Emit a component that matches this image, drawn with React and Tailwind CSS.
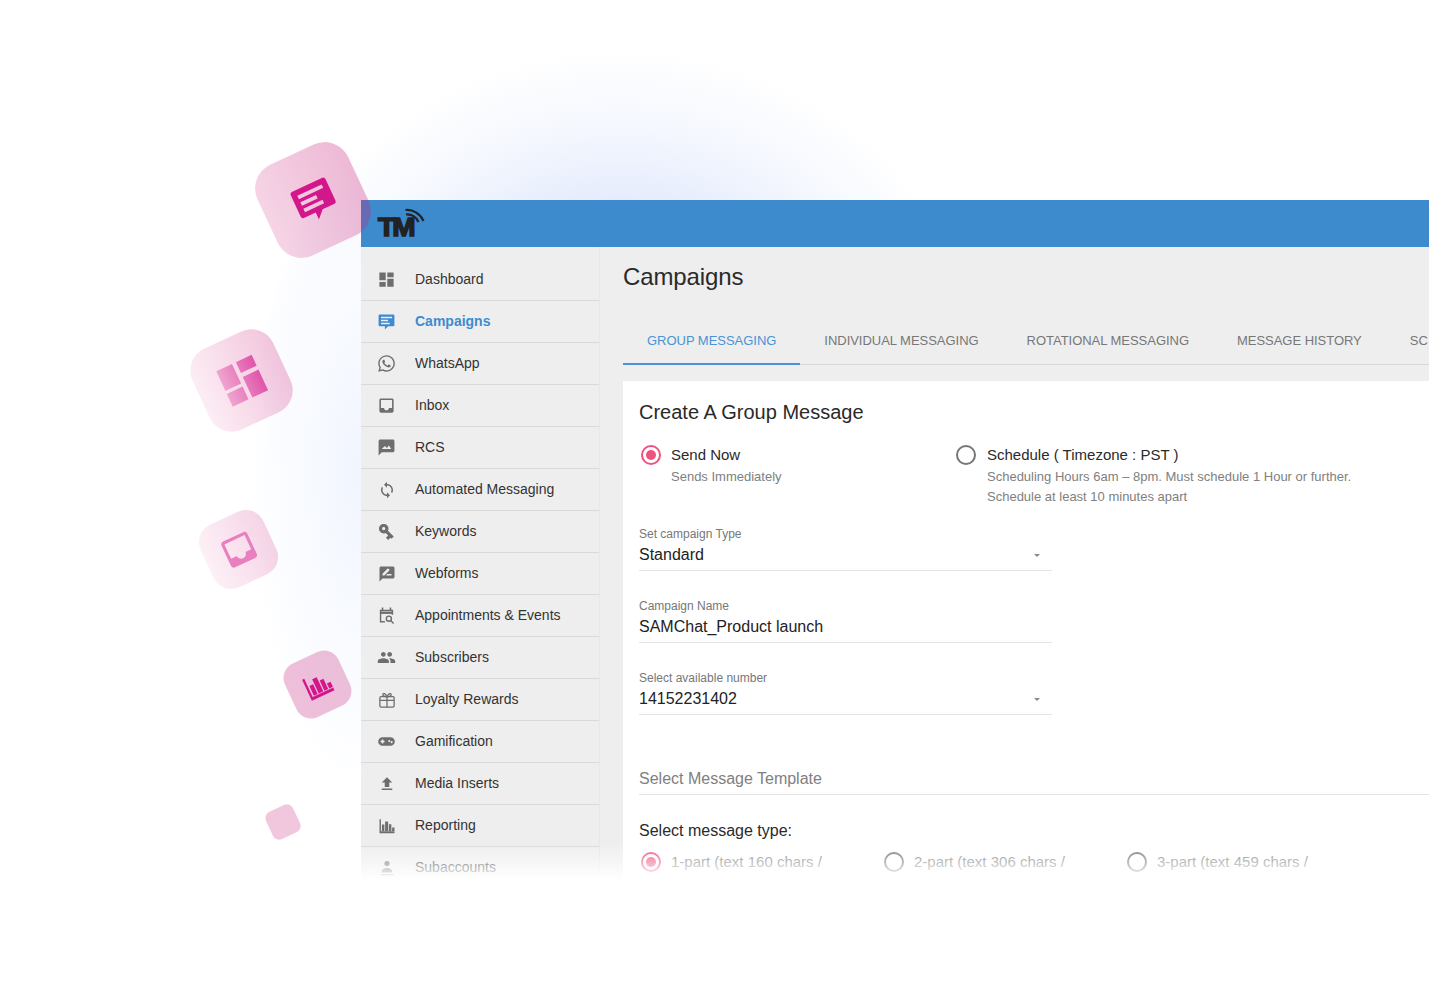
import React from "react";
import { FaWhatsapp } from "react-icons/fa";
import { MdDashboard, MdSync, MdVpnKey, MdRateReview, MdPeople, MdFileUpload } from "react-icons/md";

const INBOX = "M19 3H4.99c-1.11 0-1.98.89-1.98 2L3 19c0 1.1.88 2 1.99 2H19c1.1 0 2-.9 2-2V5c0-1.11-.9-2-2-2zm0 12h-4c0 1.66-1.35 3-3 3s-3-1.34-3-3H4.99V5H19v10z";
const BUBBLE = "M3.500 3h17A1.500 1.500 0 0 1 22 4.500v12a1.500 1.500 0 0 1-1.500 1.500H14l-4 4v-4H3.500A1.500 1.500 0 0 1 2 16.500v-12A1.500 1.500 0 0 1 3.500 3zM5 6v2h14V6zM5 9.800v2h9v-2zM5 13.500v2h11v-2z";
const BARS = "M2 3h1.900v16H22v2.500H2zM5.200 10h3.300v8.500H5.200zM9.500 6h4v12.500h-4zM14.500 9.500h3.300v9h-3.300zM18.800 14H22v4.500h-3.200z";

function I({ d, className = "" }) {
  return (
    <svg viewBox="0 0 24 24" className={className} fill="currentColor" fillRule="evenodd">
      <path d={d} />
    </svg>
  );
}

function Rcs({ className }) {
  return (
    <svg viewBox="0 0 24 24" className={className} fill="currentColor" fillRule="evenodd">
      <path d="M4 2h16c1.100 0 2 .9 2 2v12c0 1.100-.9 2-2 2H6l-4 4V4c0-1.100.9-2 2-2zM6 14h12l-3-4.500-2.500 3L10 10z" />
    </svg>
  );
}

function Calendar({ className }) {
  return (
    <svg viewBox="0 0 24 24" className={className} fill="none" stroke="currentColor" strokeWidth="1.800">
      <path d="M7 2v3M17 2v3" strokeWidth="2" />
      <path d="M10 20H4.500V5.500h15V11" />
      <path d="M4 8.500h16" strokeWidth="3" />
      <circle cx="15" cy="16" r="3.200" />
      <path d="M17.500 18.500L21 22" />
    </svg>
  );
}

function Person({ className }) {
  return (
    <svg viewBox="0 0 24 24" className={className} fill="currentColor">
      <circle cx="12" cy="6" r="3.500" />
      <path d="M5 17c0-3 4-5 7-5s7 2 7 5v1H5zM3 20h18v1.500H3z" />
    </svg>
  );
}

function Gift({ className }) {
  return (
    <svg viewBox="0 0 24 24" className={className} fill="none" stroke="currentColor" strokeWidth="1.700">
      <rect x="2.500" y="7.500" width="19" height="14" rx="1.500" />
      <path d="M2.500 12.500h19M12 7.500v14" />
      <path d="M12 7.500C10 3 7 2.500 6.500 4.500S9 7.500 12 7.500zM12 7.500C14 3 17 2.500 17.500 4.500S15 7.500 12 7.500z" />
    </svg>
  );
}

function Pad({ className }) {
  return (
    <svg viewBox="0 0 24 24" className={className} fill="currentColor" fillRule="evenodd">
      <path d="M7 6.500h10a5.500 5.500 0 0 1 0 11H7a5.500 5.500 0 0 1 0-11zM6 9.500v1.500H4.500v2H6v1.500h2V13h1.500v-2H8V9.500zM15.500 10a1.300 1.300 0 1 0 0 2.600 1.300 1.300 0 0 0 0-2.600zM18.500 11.500a1.300 1.300 0 1 0 0 2.600 1.300 1.300 0 0 0 0-2.600z" />
    </svg>
  );
}

const ico = "w-[18px] h-[18px]";
const big = "w-[19px] h-[19px]";
const rows = [
  ["Dashboard", <MdDashboard className={big} />],
  ["Campaigns", <I d={BUBBLE} className={big} />],
  ["WhatsApp", <FaWhatsapp className={big} />],
  ["Inbox", <I d={INBOX} className={big} />],
  ["RCS", <Rcs className={big} />],
  ["Automated Messaging", <MdSync className={ico} />],
  ["Keywords", <MdVpnKey className="w-[19px] h-[19px] rotate-45" />],
  ["Webforms", <MdRateReview className={ico} />],
  ["Appointments & Events", <Calendar className={big} />],
  ["Subscribers", <MdPeople className={big} />],
  ["Loyalty Rewards", <Gift className={ico} />],
  ["Gamification", <Pad className={big} />],
  ["Media Inserts", <MdFileUpload className={ico} />],
  ["Reporting", <I d={BARS} className={ico} />],
  ["Subaccounts", <Person className={ico} />],
];

function SideRow({ label, icon }) {
  const active = label === "Campaigns";
  return (
    <div className="h-[42px] shrink-0 flex items-center border-b border-[#d9d9d9]">
      <div className={`w-[54px] flex justify-center pr-[3px] ${active ? "text-[#3d8bd0]" : "text-[#6e6e6e]"}`}>{icon}</div>
      <span className={`text-[14px] ${active ? "font-bold text-[#3d8bd0]" : "text-[#333333]"}`}>{label}</span>
    </div>
  );
}

function Radio({ on }) {
  return (
    <span className={`w-5 h-5 shrink-0 rounded-full border-2 flex items-center justify-center ${on ? "border-[#f0527f]" : "border-[#767676]"}`}>
      {on && <span className="w-[10px] h-[10px] rounded-full bg-[#f0527f]" />}
    </span>
  );
}

function Field({ label, value, caret }) {
  return (
    <div className="w-[413px] border-b border-[#e4e4e4] pb-[3px]">
      <div className="text-[12px] leading-4 text-[#777777]">{label}</div>
      <div className="mt-[1px] flex items-center justify-between h-6">
        <span className="text-[16px] text-[#222222]">{value}</span>
        {caret && <span className="mr-3 w-0 h-0 border-x-[3px] border-x-transparent border-t-[3px] border-t-[#8a8a8a]" />}
      </div>
    </div>
  );
}

function Tile({ className, children }) {
  return (
    <div className={`absolute z-20 -rotate-[25deg] flex items-center justify-center ${className}`}>{children}</div>
  );
}

export default function App() {
  return (
    <div className="relative w-[1429px] h-[995px] overflow-hidden bg-white font-['Liberation_Sans',Arial,sans-serif]">
      <div className="absolute inset-0 bg-[radial-gradient(ellipse_360px_330px_at_620px_380px,#d6e2fb_0%,#e2eafc_50%,#f4f7fe_76%,#ffffff_100%)]" />
      <div className="absolute inset-0 bg-[radial-gradient(ellipse_110px_320px_at_361px_470px,#f1f5fe_0%,#f9fbff_60%,#ffffff00_100%)]" />

      <Tile className="left-[263px] top-[150px] w-[100px] h-[100px] rounded-[26px] bg-gradient-to-r from-[#d0288033] to-[#c8207850]">
        <I d={BUBBLE} className="ml-[2px] mt-[1px] w-[46px] h-[46px] text-[#d4168c]" />
      </Tile>
      <Tile className="left-[197px] top-[336px] w-[89px] h-[89px] rounded-[24px] bg-gradient-to-r from-[#e0409018] to-[#d0288044]">
        <svg viewBox="0 0 24 24" className="w-[52px] h-[52px]">
          <defs>
            <linearGradient id="dg" x1="0" x2="1" y1="0" y2="0">
              <stop offset="0" stopColor="#f0a5d0" />
              <stop offset="1" stopColor="#e055aa" />
            </linearGradient>
          </defs>
          <path fill="url(#dg)" d="M3 13h8V3H3zM3 21h8v-6.500H3zM13 21h8V10.500h-8zM13 3v5.500h8V3z" />
        </svg>
      </Tile>
      <Tile className="left-[204px] top-[515px] w-[69px] h-[69px] rounded-[19px] bg-gradient-to-r from-[#e0409014] to-[#d0288033]">
        <I d={INBOX} className="w-[38px] h-[38px] text-[#ea7fc0]" />
      </Tile>
      <Tile className="left-[288px] top-[655px] w-[59px] h-[59px] rounded-[16px] bg-[#c8207848]">
        <I d={BARS} className="w-[30px] h-[30px] text-[#d4168c]" />
      </Tile>
      <Tile className="left-[268px] top-[807px] w-[30px] h-[30px] rounded-[7px] bg-[#c8207840]" />

      <div className="relative pl-[361px] pt-[200px]">
        <div className="relative w-[1068px] h-[680px] overflow-hidden flex flex-col bg-[#eeeeee]">
          <div className="relative h-[47px] shrink-0 bg-[#3d8bcc]">
            <span className="absolute left-[17px] top-[12px] origin-left scale-x-[1.12] text-[25px] leading-[30px] font-bold text-[#222222] tracking-[-2.5px] [-webkit-text-stroke:1.4px_#222222]">TM</span>
            <svg viewBox="0 0 20 20" className="absolute left-[44px] top-[8px] w-[20px] h-[20px]" fill="none" stroke="#222222" strokeWidth="2.200">
              <path d="M0.500 2A18 18 0 0 1 18.500 13" />
              <path d="M1 6.500A12 12 0 0 1 13.500 14" />
            </svg>
          </div>
          <div className="flex flex-1 min-h-0">
            <div className="w-[239px] shrink-0 pt-[12px] border-r border-[#e6e6e6] flex flex-col">
              {rows.map(([l, i]) => (
                <SideRow key={l} label={l} icon={i} />
              ))}
            </div>
            <div className="flex-1 min-w-0 pl-[23px] pt-[14px]">
              <h1 className="text-[24px] leading-8 text-[#2a2a2a] tracking-[-0.1px]">Campaigns</h1>
              <div className="mt-6 h-12 flex border-b border-[#d8d8d8] whitespace-nowrap text-[13px] tracking-[-0.03px] text-[#777777]">
                <div className="px-6 pt-[1px] h-12 flex items-center text-[#4a93d6] border-b-2 border-[#4a93d6]">GROUP MESSAGING</div>
                <div className="px-6 pt-[1px] flex items-center">INDIVIDUAL MESSAGING</div>
                <div className="px-6 pt-[1px] flex items-center">ROTATIONAL MESSAGING</div>
                <div className="px-6 pt-[1px] flex items-center">MESSAGE HISTORY</div>
                <div className="px-6 pt-[1px] flex items-center">SC</div>
              </div>
              <div className="mt-4 bg-white pl-4 pt-[17px] h-[600px]">
                <h2 className="text-[20px] leading-7 text-[#2a2a2a]">Create A Group Message</h2>
                <div className="flex mt-[19px] pl-[2px]">
                  <div className="w-[315px] flex gap-[10px]">
                    <Radio on />
                    <div>
                      <div className="text-[15px] leading-5 text-[#2a2a2a]">Send Now</div>
                      <div className="text-[13px] leading-5 mt-[2px] text-[#808080]">Sends Immediately</div>
                    </div>
                  </div>
                  <div className="flex gap-[11px]">
                    <Radio />
                    <div>
                      <div className="text-[15px] leading-5 text-[#2a2a2a]">Schedule ( Timezone : PST )</div>
                      <div className="text-[13px] leading-5 mt-[2px] text-[#808080]">Scheduling Hours 6am – 8pm. Must schedule 1 Hour or further.</div>
                      <div className="text-[13px] leading-5 text-[#808080]">Schedule at least 10 minutes apart</div>
                    </div>
                  </div>
                </div>
                <div className="mt-[19px] flex flex-col gap-[27px]">
                  <Field label="Set campaign Type" value="Standard" caret />
                  <Field label="Campaign Name" value="SAMChat_Product launch" />
                  <Field label="Select available number" value="14152231402" caret />
                </div>
                <div className="mt-[51px] h-[29px] text-[16px] leading-[26px] text-[#808080] border-b border-[#e4e4e4]">Select Message Template</div>
                <div className="mt-[26px] text-[16px] leading-5 text-[#2a2a2a]">Select message type:</div>
                <div className="mt-[11px] pl-[2px] flex text-[15px] leading-5 text-[#808080]">
                  {["1-part (text 160 chars /", "2-part (text 306 chars /", "3-part (text 459 chars /"].map((t, n) => (
                    <div key={t} className="w-[243px] flex gap-[10px]">
                      <Radio on={n === 0} />
                      <span>{t}</span>
                    </div>
                  ))}
                </div>
              </div>
            </div>
          </div>
          <div className="absolute left-0 right-0 bottom-0 h-[36px] bg-gradient-to-b from-[#ffffff00] to-white" />
        </div>
      </div>
    </div>
  );
}
